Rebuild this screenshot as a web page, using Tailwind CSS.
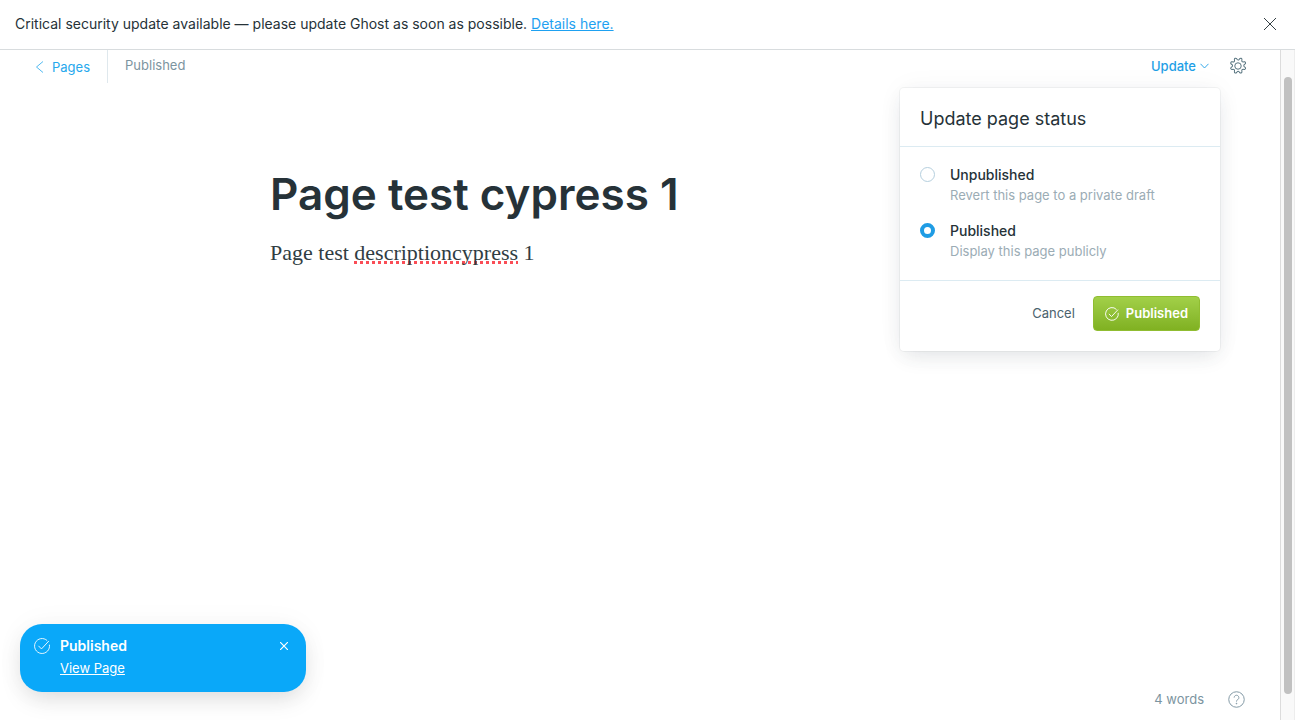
<!DOCTYPE html>
<html lang="en">
<head>
<meta charset="utf-8">
<meta name="viewport" content="width=device-width, initial-scale=1">
<title>Page test cypress 1</title>
<script src="https://cdn.jsdelivr.net/npm/@tailwindcss/browser@4"></script>
</head>
<body class="flex h-screen flex-col overflow-hidden bg-white font-['Inter',sans-serif] text-[#15212a]">
<aside class="flex shrink-0 items-center justify-between border-b border-[#d8dcde] pt-3 pr-[15px] pb-[13px] pl-[15px] text-[14px] leading-6 text-[#263238]">
  <p>Critical security update available — please update Ghost as soon as possible. <a href="#details" class="text-[#1ea1f1] underline">Details here.</a></p>
  <button type="button" aria-label="Close alert" class="flex size-5 items-center justify-center text-[#343f44]">
    <svg class="size-3" viewBox="0 0 12 12" fill="none" stroke="currentColor" stroke-width="1"><path d="M0 0L12 12M12 0L0 12"/></svg>
  </button>
</aside>
<div class="flex min-h-0 flex-1">
  <main class="relative flex min-w-0 flex-1 flex-col">
    <header class="flex items-start justify-between pr-[33px] pl-[35px] text-[13px] leading-5">
      <div class="flex items-start">
        <a href="#pages" class="flex h-[33px] items-center gap-2 border-r border-[#dfe8ed] pr-[17px] text-[#26a8ed]">
          <svg class="h-3 w-[9px]" viewBox="0 0 9 12" fill="none" stroke="currentColor" stroke-width=".8"><path d="M8 .5L1.5 6L8 11.5"/></svg>
          <span>Pages</span>
        </a>
        <span class="pt-[5px] pl-[17px] text-[#7c94a0]">Published</span>
      </div>
      <div class="flex h-8 items-center gap-5">
        <button type="button" aria-expanded="true" class="flex items-center gap-1 font-medium text-[#1f9fe6]">Update
          <svg class="h-[6px] w-[9px]" viewBox="0 0 9 6" fill="none" stroke="currentColor" stroke-width=".9"><path d="M.5 .8L4.500 5L8.500 .8"/></svg>
        </button>
        <button type="button" aria-label="Settings" class="flex size-[18px] items-center justify-center text-[#53707c]">
          <svg class="size-[18px]" viewBox="0 0 24 24" fill="none" stroke="currentColor" stroke-width="1.3" stroke-linejoin="round"><circle cx="12" cy="12" r="4.300"/><path transform="rotate(22.5 12 12)" d="M13.550 2.020a1.610 1.610 0 0 0-3.100 0l-.44 1.500a1.610 1.610 0 0 1-2.230.92l-1.370-.75A1.610 1.610 0 0 0 4.220 5.880l.75 1.370a1.610 1.610 0 0 1-.92 2.230l-1.500.44a1.610 1.610 0 0 0 0 3.100l1.500.44a1.610 1.610 0 0 1 .92 2.230l-.75 1.370a1.610 1.610 0 0 0 2.190 2.190l1.370-.75a1.610 1.610 0 0 1 2.230.92l.44 1.500a1.610 1.610 0 0 0 3.100 0l.44-1.500a1.610 1.610 0 0 1 2.230-.92l1.370.75a1.610 1.610 0 0 0 2.190-2.190l-.75-1.370a1.610 1.610 0 0 1 .92-2.230l1.500-.44a1.610 1.610 0 0 0 0-3.100l-1.500-.44a1.610 1.610 0 0 1-.92-2.230l.75-1.370a1.610 1.610 0 0 0-2.190-2.190l-1.370.75a1.610 1.610 0 0 1-2.230-.92z"/></svg>
        </button>
      </div>
    </header>

    <form class="mx-auto flex w-full max-w-[740px] flex-1 flex-col pt-20">
      <input type="text" aria-label="Page title" value="Page test cypress 1" class="h-[62px] w-full text-[44px] leading-[62px] font-semibold text-[#263238] outline-none">
      <div role="textbox" aria-label="Page body" contenteditable="true" spellcheck="false" class="pt-3 font-['Liberation_Serif',serif] text-[22px] leading-8 text-[#303d43] outline-none">Page test <span class="underline decoration-[#fa4d56] decoration-dotted decoration-[3px] underline-offset-1 [text-decoration-skip-ink:none]">descriptioncypress</span> 1</div>
    </form>

    <footer class="flex items-center justify-end gap-6 pr-[35px] pb-3 text-[13px] leading-[18px] text-[#7c94a0]">
      <span>4 words</span>
      <a href="#help" aria-label="Help">
        <svg class="size-[17px]" viewBox="0 0 18 18" fill="none" stroke="currentColor" stroke-width="1"><circle cx="9" cy="9" r="8.200"/><path d="M6.500 7a2.500 2.500 0 1 1 3.900 2.100C9.400 9.700 9 10 9 11.200"/><circle cx="9" cy="13.300" r=".4" fill="currentColor"/></svg>
      </a>
    </footer>

    <section aria-labelledby="status-title" class="absolute top-[38px] right-[60px] w-80 rounded bg-white shadow-[0_0_0_1px_rgba(39,55,65,0.05),0_8px_20px_-4px_rgba(39,55,65,0.12),0_0_28px_rgba(39,55,65,0.04)]">
      <h2 id="status-title" class="border-b border-[#dcebf2] px-5 pt-[19px] pb-[15px] text-[18px] leading-6 text-[#263238]">Update page status</h2>
      <fieldset class="flex flex-col gap-4 px-5 pt-[18px] pb-[19px]">
        <div class="flex gap-[15px]">
          <input type="radio" name="status" id="unpublished" aria-describedby="unpublished-note" class="mt-[2px] size-[15px] shrink-0 appearance-none rounded-full border border-[#b5cfde] checked:border-4 checked:border-[#1f9ce4]">
          <div>
            <label for="unpublished" class="block text-[14px] leading-5 font-medium text-[#263238]">Unpublished</label>
            <p id="unpublished-note" class="text-[13px] leading-5 text-[#9bacb5]">Revert this page to a private draft</p>
          </div>
        </div>
        <div class="flex gap-[15px]">
          <input type="radio" name="status" id="published" checked aria-describedby="published-note" class="mt-[2px] size-[15px] shrink-0 appearance-none rounded-full border border-[#b5cfde] checked:border-4 checked:border-[#1f9ce4]">
          <div>
            <label for="published" class="block text-[14px] leading-5 font-medium text-[#263238]">Published</label>
            <p id="published-note" class="text-[13px] leading-5 text-[#9bacb5]">Display this page publicly</p>
          </div>
        </div>
      </fieldset>
      <div class="flex items-center justify-end gap-[18px] border-t border-[#dcebf2] px-5 pt-[15px] pb-5 text-[13px]">
        <button type="button" class="text-[#4b626d]">Cancel</button>
        <button type="button" class="flex h-[35px] items-center gap-[7px] rounded border border-[#90bd31] bg-linear-to-b from-[#a2d048] to-[#80b121] px-[11px] font-semibold text-white">
          <svg class="size-[14px]" viewBox="0 0 18 18" fill="none" stroke="currentColor" stroke-width="1.200"><path d="M14.800 3.200A8.200 8.200 0 1 0 17 7.500"/><path d="M5 8.800l3.400 3.500L16.700 3.400"/></svg>
          Published
        </button>
      </div>
    </section>

    <article role="status" class="absolute bottom-7 left-5 flex h-[68px] w-[286px] items-start gap-[10px] rounded-[22px] bg-[#0aa8f9] pt-3 pr-4 pl-[14px] text-white shadow-[0_10px_24px_-4px_rgba(0,0,0,0.13),0_0_30px_rgba(0,0,0,0.04)]">
      <svg class="mt-[2px] size-4 shrink-0" viewBox="0 0 18 18" fill="none" stroke="currentColor" stroke-width="1"><path d="M14.800 2.900A8.400 8.400 0 1 0 17.300 7.500"/><path d="M5 8.800l3.400 3.500L16.700 3.400"/></svg>
      <div class="flex-1">
        <p class="text-[14px] leading-5 font-semibold">Published</p>
        <a href="#view" class="block pt-[2px] text-[13px] leading-5 underline">View Page</a>
      </div>
      <button type="button" aria-label="Dismiss notification" class="mt-[4px] flex size-3 items-center justify-center">
        <svg class="size-2" viewBox="0 0 8 8" fill="none" stroke="currentColor" stroke-width="1.200"><path d="M0 0L8 8M8 0L0 8"/></svg>
      </button>
    </article>
  </main>
  <div aria-hidden="true" class="flex w-[15px] shrink-0 justify-center border-r border-l border-r-[#ededed] border-l-[#dcdcdc] bg-[#f9f9f9] pt-[27px] pb-[26px]">
    <div class="w-2 rounded-full bg-[#c1c1c1]"></div>
  </div>
</div>
</body>
</html>
